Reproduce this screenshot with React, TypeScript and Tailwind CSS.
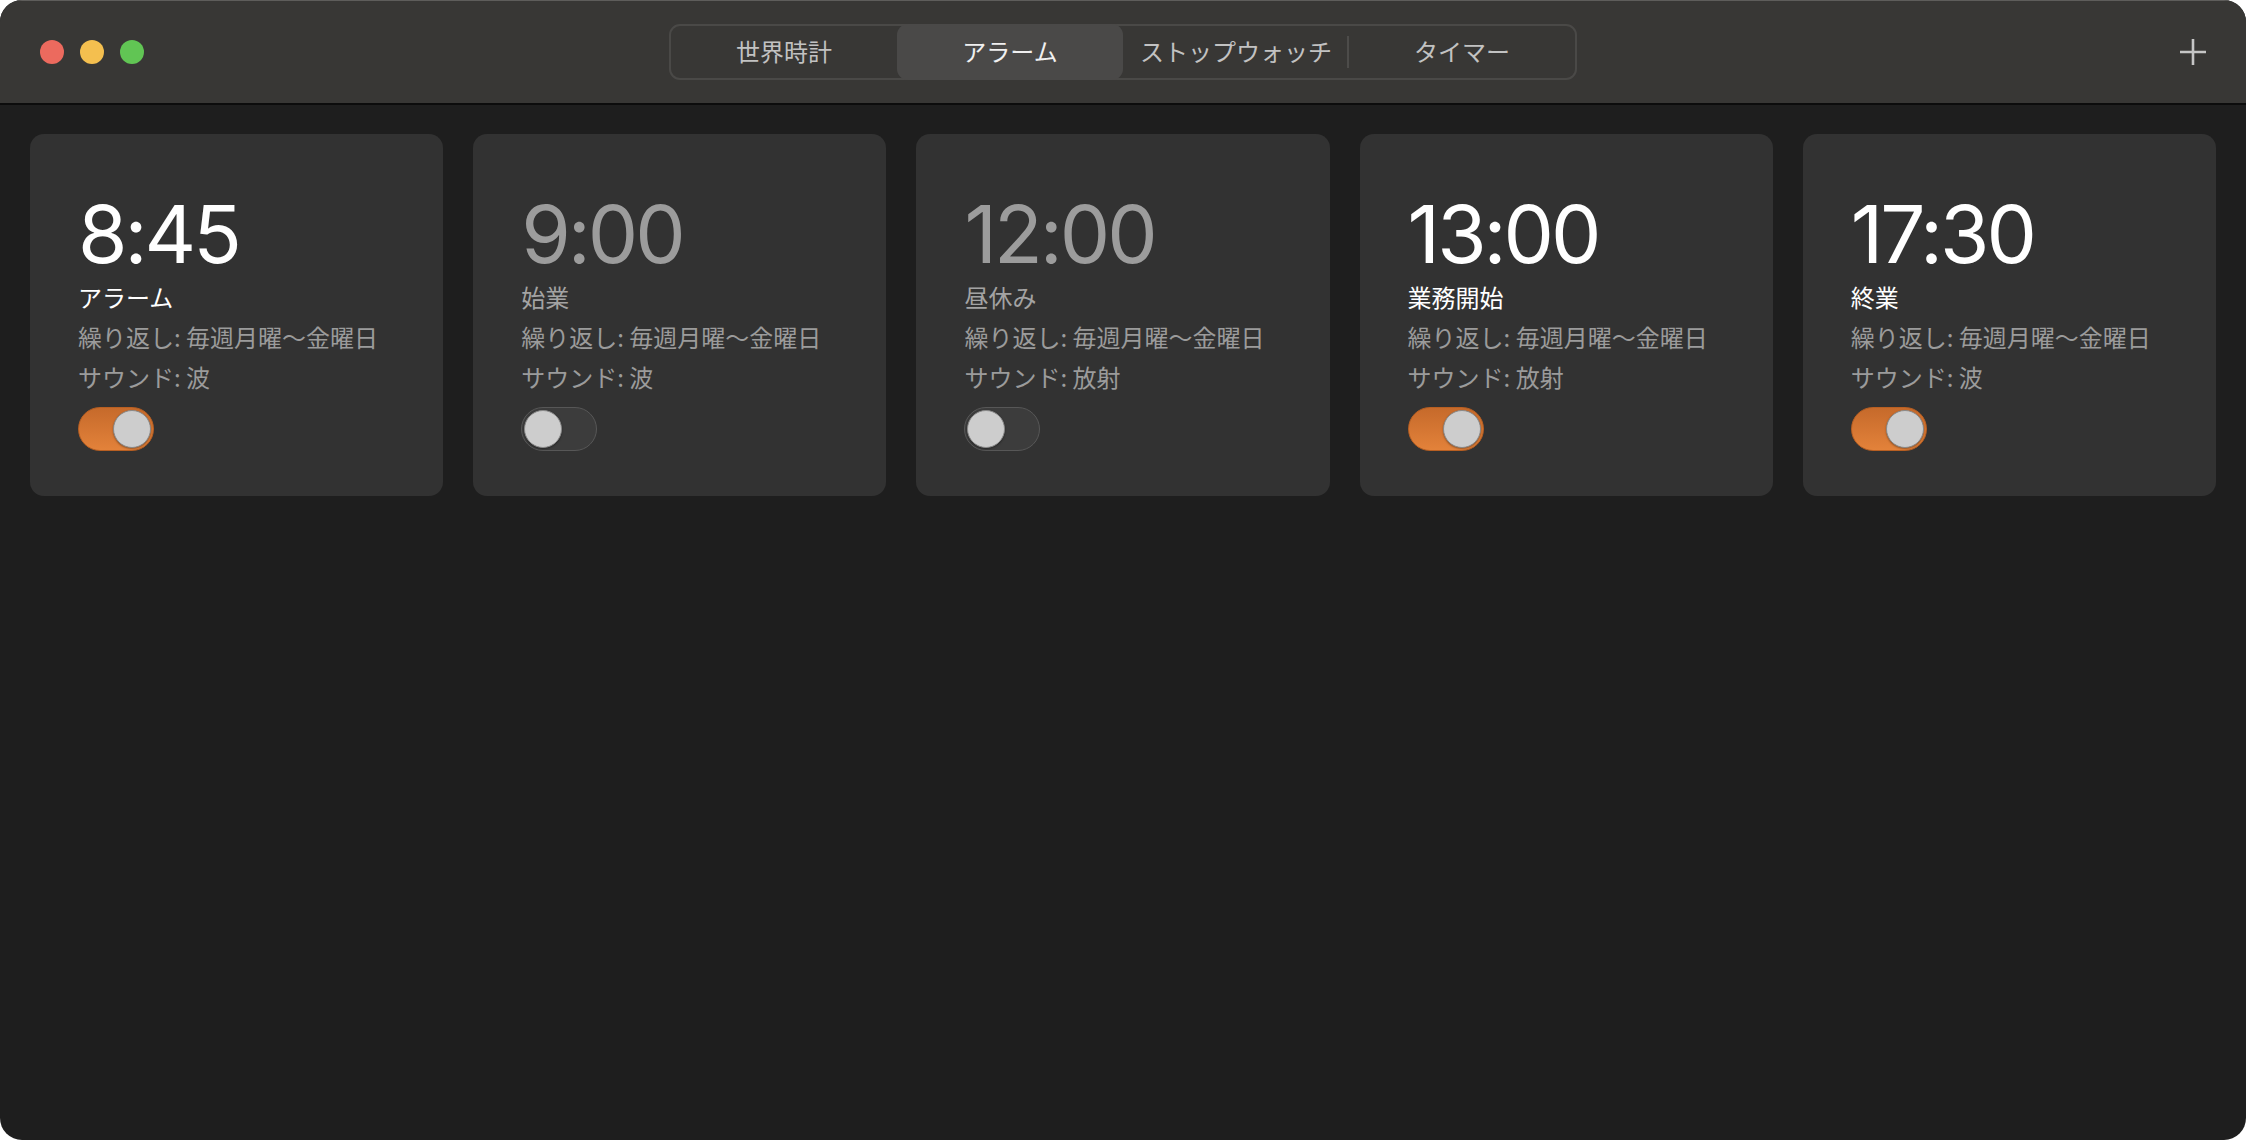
import { useState } from "react";

interface Alarm {
  time: string;
  label: string;
  repeat: string;
  sound: string;
  on: boolean;
}

const alarms: Alarm[] = [
  { time: "8:45", label: "アラーム", repeat: "毎週月曜〜金曜日", sound: "波", on: true },
  { time: "9:00", label: "始業", repeat: "毎週月曜〜金曜日", sound: "波", on: false },
  { time: "12:00", label: "昼休み", repeat: "毎週月曜〜金曜日", sound: "放射", on: false },
  { time: "13:00", label: "業務開始", repeat: "毎週月曜〜金曜日", sound: "放射", on: true },
  { time: "17:30", label: "終業", repeat: "毎週月曜〜金曜日", sound: "波", on: true },
];

const tabs = ["世界時計", "アラーム", "ストップウォッチ", "タイマー"];

const jp = "font-['Noto_Sans_CJK_JP','Noto_Sans',sans-serif]";

function Toggle({ on, onClick }: { on: boolean; onClick: () => void }) {
  return (
    <button
      onClick={onClick}
      className={`flex h-[44px] w-[76px] items-center rounded-full border p-[2px] ${
        on
          ? "justify-end border-[#b85f22] bg-gradient-to-b from-[#c66a2b] to-[#e3823a]"
          : "justify-start border-[#575757] bg-[#3c3c3c]"
      }`}
    >
      <span className="block h-[38px] w-[38px] rounded-full border border-[#8a8a8a] bg-[#cdcdcd] shadow-[0_1px_2px_rgba(0,0,0,0.35)]" />
    </button>
  );
}

function AlarmCard({ alarm, onToggle }: { alarm: Alarm; onToggle: () => void }) {
  return (
    <div className="flex h-[362px] flex-col rounded-[14px] bg-[#323232] pl-[48px] pt-[60px]">
      <div
        className={`font-['Inter',sans-serif] text-[80px] leading-[80px] font-normal tracking-[-3px] ${
          alarm.on ? "text-white" : "text-[#9c9c9c]"
        }`}
      >
        {alarm.time}
      </div>
      <div className={`${jp} mt-[3px] text-[24px] leading-[40px] ${alarm.on ? "text-white" : "text-[#a3a3a3]"}`}>
        {alarm.label}
      </div>
      <div className={`${jp} text-[24px] leading-[40px] text-[#9b9b9b]`}>繰り返し: {alarm.repeat}</div>
      <div className={`${jp} text-[24px] leading-[40px] text-[#9b9b9b]`}>サウンド: {alarm.sound}</div>
      <div className="mt-[10px]">
        <Toggle on={alarm.on} onClick={onToggle} />
      </div>
    </div>
  );
}

export default function App() {
  const [items, setItems] = useState(alarms);
  const [tab, setTab] = useState(1);

  return (
    <div className="h-[1140px] w-[2246px] bg-white">
      <div className="flex h-full w-full flex-col overflow-hidden rounded-[22px] bg-[#1e1e1e]">
        {/* Title bar */}
        <div className="grid h-[105px] shrink-0 grid-cols-[1fr_auto_1fr] items-center border-t border-b-2 border-t-[#5e5d5b] border-b-[#0c0c0c] bg-[#383735] px-[40px]">
          <div className="flex items-center gap-[16px]">
            <span className="h-[24px] w-[24px] rounded-full bg-[#ec6a5e]" />
            <span className="h-[24px] w-[24px] rounded-full bg-[#f4bf4f]" />
            <span className="h-[24px] w-[24px] rounded-full bg-[#61c554]" />
          </div>

          <div className="flex h-[56px] w-[908px] items-stretch rounded-[11px] border-2 border-[#4a4947]">
            {tabs.map((t, i) => (
              <button
                key={t}
                onClick={() => setTab(i)}
                className={`relative flex flex-1 items-center justify-center pb-[2px] ${jp} text-[24px] ${
                  tab === i ? "-my-[2px] rounded-[11px] bg-[#4a4948] text-[#f0f0f0]" : "text-[#c2c2c2]"
                }`}
              >
                {t}
                {i === 2 && tab !== 2 && tab !== 3 && (
                  <span className="absolute right-0 top-[10px] bottom-[10px] w-[2px] bg-[#4d4c4a]" />
                )}
              </button>
            ))}
          </div>

          <div className="flex justify-end">
            <svg width="28" height="28" viewBox="0 0 28 28" className="mr-[-1px]">
              <path d="M14 1v26M1 14h26" stroke="#c6c6c6" strokeWidth="2.6" />
            </svg>
          </div>
        </div>

        {/* Alarm cards */}
        <div className="grid grid-cols-5 gap-[30px] px-[30px] pt-[29px]">
          {items.map((a, i) => (
            <AlarmCard
              key={a.time}
              alarm={a}
              onToggle={() => setItems(items.map((x, j) => (j === i ? { ...x, on: !x.on } : x)))}
            />
          ))}
        </div>
      </div>
    </div>
  );
}
